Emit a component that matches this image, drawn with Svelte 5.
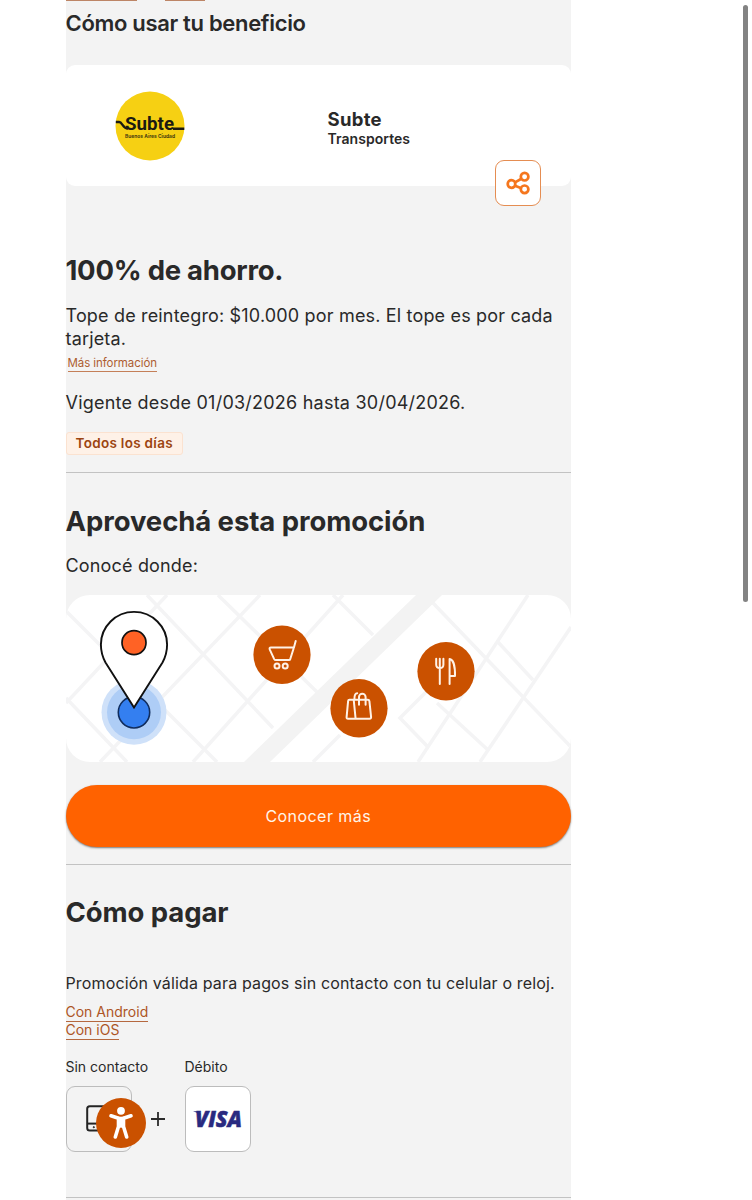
<script lang="ts">
  const benefit = {
    shop: 'Subte',
    category: 'Transportes',
    headline: '100% de ahorro.',
    limit: 'Tope de reintegro: $10.000 por mes. El tope es por cada tarjeta.',
    validity: 'Vigente desde 01/03/2026 hasta 30/04/2026.',
    days: 'Todos los días'
  };

  const payLinks = ['Con Android', 'Con iOS'];

  // street grid of the map illustration
  const streets = [
    'M0 16L130 146L151 167',
    'M81 0L207 133',
    'M152 0L252 98',
    'M194 0L34 167',
    'M101 0L0 108',
    'M0 103L61 167',
    'M127 167L277 0',
    'M267 0L307 40',
    'M247 167L274 140',
    'M367 8L505 152',
    'M462 0L352 167',
    'M505 32L414 167',
    'M432 47L467 85',
    'M364 93L334 123L362 152',
    'M371 108L422 155'
  ];
</script>

<div class="page">
  <main class="panel">
    <div class="tabs">
      <span class="tab-line first"></span>
      <span class="tab-line second"></span>
    </div>

    <h3 class="page-title">Cómo usar tu beneficio</h3>

    <section class="shop-card">
      <svg class="shop-logo" viewBox="0 0 70 70">
        <circle cx="35" cy="35" r="34.5" fill="#f6d013" />
        <path d="M.8 31h3.4c3 0 4 6.7 8.6 6.7M58 37.7h11.3" fill="none" stroke="#1b1a12" stroke-width="2.4" />
        <text x="10" y="38.6" class="logo-name" textLength="49" lengthAdjust="spacingAndGlyphs">{benefit.shop}</text>
        <text x="10" y="46.5" class="logo-city" textLength="50" lengthAdjust="spacingAndGlyphs">Buenos Aires Ciudad</text>
      </svg>
      <div class="shop-info">
        <strong>{benefit.shop}</strong>
        <span>{benefit.category}</span>
      </div>
      <button class="share" aria-label="Compartir">
        <svg width="26" height="26" viewBox="0 0 26 26" fill="none" stroke="#f5761d" stroke-width="2.7">
          <path d="M10 12.4L16.4 8.8M10 15.8L16.4 18.2" />
          <circle cx="6.5" cy="14" r="3.8" />
          <circle cx="19.6" cy="6.7" r="3.8" />
          <circle cx="19.6" cy="19.3" r="3.8" />
        </svg>
      </button>
    </section>

    <section class="detail">
      <h2>{benefit.headline}</h2>
      <p class="limit">{benefit.limit}</p>
      <a class="more" href="#info">Más información</a>
      <p class="validity">{benefit.validity}</p>
      <span class="badge">{benefit.days}</span>
    </section>

    <section class="where">
      <h2>Aprovechá esta promoción</h2>
      <p>Conocé donde:</p>

      <svg class="map" viewBox="0 0 505 167" fill="none">
        <g stroke="#f4f4f5" stroke-width="3.5">
          {#each streets as d}
            <path {d} />
          {/each}
        </g>
        <path d="M178 167H204L376 0H350Z" fill="#f3f3f3" />

        <!-- location pin -->
        <circle cx="68" cy="117.3" r="32.5" fill="#cfe1f9" />
        <circle cx="68" cy="117.3" r="27" fill="#aecdf6" />
        <circle cx="68" cy="117.3" r="15.7" fill="#347ff0" stroke="#102d5e" stroke-width="1.6" />
        <path d="M68 112.5L39.5 67.5C36.5 62 34.9 56 34.9 49.5a33.1 32.6 0 0 1 66.2 0C101.1 56 99.5 62 96.5 67.5Z" fill="#fff" stroke="#111" stroke-width="1.9" />
        <circle cx="68" cy="47.7" r="12" fill="#ff6225" stroke="#111" stroke-width="1.7" />

        <g fill="#ca5100">
          <ellipse cx="216" cy="59.7" rx="28.6" ry="29.3" />
          <ellipse cx="293" cy="113.3" rx="28.6" ry="29.3" />
          <ellipse cx="380" cy="76.3" rx="28.6" ry="29.3" />
        </g>

        <g stroke="#fff2e6" stroke-width="2" stroke-linecap="round" stroke-linejoin="round">
          <g transform="translate(216 59.7)">
            <path d="M13.7-13.7L12-7.5L8.2 4.6Q8 5.4 7 5.4H-6.2Q-7.3 5.4-7.8 4.4L-12.2-5Q-13-7.3-11-7.3H12" />
            <circle cx="-5" cy="11.3" r="2.5" />
            <circle cx="3.2" cy="11.3" r="2.5" />
          </g>
          <g transform="translate(293 113.3)">
            <path d="M-9.6-8.6H8.8Q10.2-8.6 10.4-7.2L12.1 8.8Q12.2 10.4 10.6 10.4H-11Q-12.6 10.4-12.4 8.8L-10.9-7.2Q-10.8-8.6-9.6-8.6ZM-5.3-8.6L-3.4 10.4M0-3.5V-11.3a3.3 3.3 0 0 1 6.6 0V-3.5M-4.6-9c0-3.7.7-6 2.8-6" />
          </g>
          <g transform="translate(380 76.3)">
            <path d="M-9.8-12.6V-6.5Q-9.8-3.2-6.2-3.2T-2.6-6.5V-12.6M-6.2-12.6V12.6M3.6-12.4V12.8M3.6-12.4C7.4-12 9.2-4.5 9 4.6H3.6" />
          </g>
        </g>
      </svg>

      <button class="cta">Conocer más</button>
    </section>

    <section class="pay">
      <h2>Cómo pagar</h2>
      <p>Promoción válida para pagos sin contacto con tu celular o reloj.</p>
      <nav>
        {#each payLinks as link}
          <a href="#pagar">{link}</a>
        {/each}
      </nav>

      <div class="methods">
        <div class="method">
          <span class="label">Sin contacto</span>
          <div class="tile">
            <svg class="phone" width="22" height="28" viewBox="0 0 22 28" fill="none" stroke="#242424" stroke-width="2">
              <rect x="1.2" y="1.2" width="19" height="24.4" rx="2.6" />
              <path d="M1.2 18.6h19" />
              <circle cx="7.8" cy="22.2" r=".6" fill="#242424" stroke-width="1" />
            </svg>
            <button class="a11y" aria-label="Accesibilidad">
              <svg width="50" height="50" viewBox="0 0 50 50">
                <circle cx="25" cy="25" r="25" fill="#ca5100" />
                <circle cx="25" cy="12.8" r="3.9" fill="#fff" />
                <path d="M15 17.8L22.5 20.3V28.5L19.3 39M35 17.8L27.5 20.3V28.5L30.7 39" fill="none" stroke="#fff" stroke-width="3.6" stroke-linecap="round" stroke-linejoin="round" />
                <path d="M21 18.7h8v11h-8z" fill="#fff" />
              </svg>
            </button>
          </div>
        </div>
        <svg class="plus" width="14" height="14" viewBox="0 0 14 14" stroke="#2b2b2b" stroke-width="1.8">
          <path d="M7 0v14M0 7h14" />
        </svg>
        <div class="method">
          <span class="label">Débito</span>
          <div class="tile white">
            <svg width="60" height="40" viewBox="0 0 60 40">
              <text x="7" y="28.3" class="visa" textLength="47" lengthAdjust="spacingAndGlyphs">VISA</text>
              <path d="M5 12.2H11L13 15.8Q9 13.2 5 12.2Z" fill="#292a80" />
            </svg>
          </div>
        </div>
      </div>
    </section>
  </main>

  <div class="scrollbar"></div>
</div>

<style>
  :global(body) {
    background: #fff;
    overflow: hidden;
  }

  .page {
    display: flex;
    justify-content: space-between;
    height: 1200px;
    padding: 0 4px 0 65.5px;
    box-sizing: border-box;
    font-family: Inter, 'Liberation Sans', sans-serif;
    color: #292929;
    overflow: hidden;
  }

  .panel {
    width: 505.5px;
    height: 1200px;
    background: #f3f3f3;
  }

  h2,
  h3,
  p {
    margin: 0;
  }

  button {
    font-family: inherit;
    padding: 0;
    cursor: pointer;
  }

  .tabs {
    display: flex;
    gap: 28px;
    height: 8px;
  }

  .tab-line {
    height: 1px;
    background: #bd8566;
  }

  .first {
    width: 71px;
  }

  .second {
    width: 40px;
  }

  .page-title {
    font-size: 22px;
    font-weight: 600;
    line-height: 30px;
    letter-spacing: -0.32px;
  }

  .shop-card {
    position: relative;
    display: grid;
    grid-template-columns: 262px 1fr;
    align-items: center;
    height: 121px;
    margin-top: 27px;
    background: #fff;
    border-radius: 9px;
  }

  .shop-logo {
    width: 70px;
    height: 70px;
    margin-left: 49.5px;
  }

  .logo-name {
    font-family: Roboto, sans-serif;
    font-size: 18.5px;
    font-weight: 700;
    fill: #1b1a12;
  }

  .logo-city {
    font-size: 5px;
    font-weight: 700;
    fill: #4a400f;
  }

  .shop-info {
    display: flex;
    flex-direction: column;
    padding-top: 5px;
  }

  .shop-info strong {
    font-size: 18.5px;
    font-weight: 700;
    line-height: 22px;
    letter-spacing: 0.3px;
  }

  .shop-info span {
    font-size: 14px;
    font-weight: 600;
    line-height: 18px;
    letter-spacing: 0.05px;
  }

  .share {
    position: absolute;
    right: 30px;
    bottom: -20px;
    display: grid;
    place-items: center;
    width: 46px;
    height: 46px;
    box-sizing: border-box;
    background: #fff;
    border: 1.5px solid #e58d52;
    border-radius: 9px;
  }

  h2 {
    font-size: 27.5px;
    font-weight: 700;
    line-height: 34px;
    letter-spacing: -0.08px;
  }

  .detail {
    display: flex;
    flex-direction: column;
    align-items: flex-start;
    padding: 67px 0 17px;
    border-bottom: 1px solid #c2c2c2;
  }

  .detail h2 {
    letter-spacing: -0.25px;
  }

  .limit,
  .validity,
  .where p {
    font-size: 18px;
    line-height: 23px;
    letter-spacing: 0.17px;
  }

  .limit {
    margin-top: 17px;
  }

  .more {
    margin: 5px 0 0 2px;
    font-size: 11.5px;
    line-height: 16px;
    letter-spacing: -0.08px;
    color: #ad5d31;
    text-decoration: none;
    border-bottom: 1px solid #c47f58;
  }

  .validity {
    margin-top: 19px;
    letter-spacing: 0.23px;
  }

  .badge {
    margin-top: 18px;
    padding: 0 9px;
    font-size: 13.5px;
    font-weight: 600;
    line-height: 21px;
    letter-spacing: 0.3px;
    color: #9c4511;
    background: #fef1e7;
    border: 1px solid #fbe2d0;
    border-radius: 3px;
  }

  .where {
    padding: 31px 0 17px;
    border-bottom: 1px solid #c2c2c2;
  }

  .where p {
    margin-top: 16px;
  }

  .map {
    display: block;
    width: 505px;
    height: 167px;
    margin-top: 18px;
    background: #fff;
    border-radius: 24px;
  }

  .cta {
    display: block;
    width: 100%;
    height: 62px;
    margin-top: 23px;
    font-size: 16px;
    letter-spacing: 0.45px;
    color: #fff5e9;
    background: #ff6200;
    border: none;
    border-radius: 31px;
    box-shadow: 0 1px 2px rgba(0, 0, 0, 0.5);
  }

  .pay {
    height: 333px;
    padding-top: 30px;
    box-sizing: border-box;
    border-bottom: 1px solid #c2c2c2;
  }

  .pay p {
    margin-top: 43px;
    font-size: 16px;
    line-height: 22px;
    letter-spacing: 0.15px;
    white-space: nowrap;
  }

  nav {
    display: flex;
    flex-direction: column;
    align-items: flex-start;
    margin-top: 10px;
  }

  nav a {
    padding-bottom: 1px;
    font-size: 14px;
    line-height: 16px;
    color: #ad5525;
    text-decoration: none;
    border-bottom: 1px solid #b5683f;
  }

  .methods {
    display: flex;
    margin-top: 18px;
  }

  .method {
    width: 66px;
  }

  .label {
    display: block;
    margin-bottom: 10px;
    font-size: 14px;
    line-height: 18px;
    white-space: nowrap;
  }

  .tile {
    position: relative;
    display: grid;
    place-items: center;
    width: 66px;
    height: 66px;
    box-sizing: border-box;
    border: 1px solid #bcbcbc;
    border-radius: 9px;
  }

  .white {
    background: #fff;
  }

  .phone {
    margin-right: 4px;
  }

  .a11y {
    position: absolute;
    top: 11px;
    left: 29px;
    width: 50px;
    height: 50px;
    background: none;
    border: none;
  }

  .a11y svg {
    display: block;
  }

  .plus {
    margin: 54px 19.5px 0;
  }

  .visa {
    font-family: 'Open Sans', sans-serif;
    font-size: 22px;
    font-weight: 800;
    font-style: italic;
    fill: #292a80;
    stroke: #292a80;
    stroke-width: 0.5px;
  }

  .scrollbar {
    width: 5px;
    height: 597px;
    margin-top: 5px;
    background: #838383;
    border-radius: 3px;
  }
</style>
